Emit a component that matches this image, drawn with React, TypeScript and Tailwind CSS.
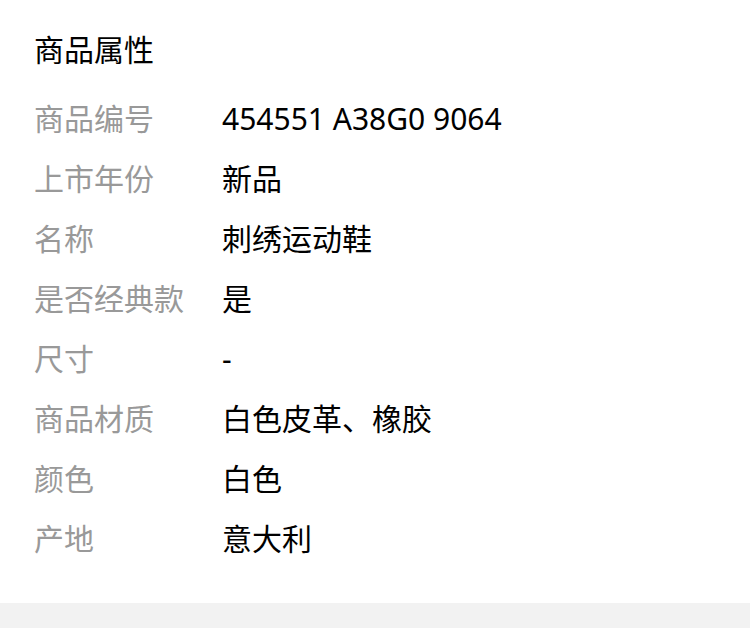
import React from 'react';

const ROWS: [string, string][] = [
  ['商品编号', '454551 A38G0 9064'],
  ['上市年份', '新品'],
  ['名称', '刺绣运动鞋'],
  ['是否经典款', '是'],
  ['尺寸', '-'],
  ['商品材质', '白色皮革、橡胶'],
  ['颜色', '白色'],
  ['产地', '意大利'],
];

export default function App() {
  return (
    <div
      className="w-[750px] h-[628px] bg-white flex flex-col overflow-hidden"
      style={{ fontFamily: '"Noto Sans", "Noto Sans CJK SC", sans-serif' }}
    >
      <div className="pl-[34px] pt-[30px] pb-[35px]">
        <h2 className="h-[40px] leading-[40px] text-[30px] text-black mb-[18px]">商品属性</h2>
        {ROWS.map(([label, value]) => (
          <div key={label} className="flex items-center h-[60px] text-[30px]">
            <span className="w-[188px] shrink-0 text-[#999999]">{label}</span>
            <span className="text-black">{value}</span>
          </div>
        ))}
      </div>
      <div className="flex-1 bg-[#f2f2f2]" />
    </div>
  );
}
